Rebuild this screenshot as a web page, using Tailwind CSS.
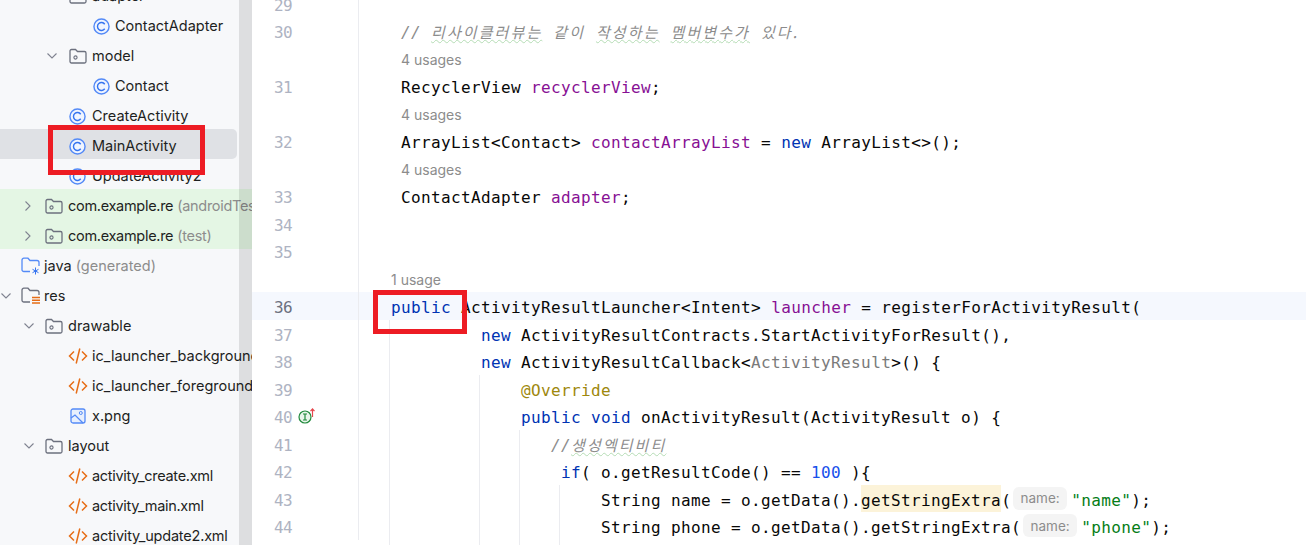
<!DOCTYPE html>
<html lang="en">
<head>
  <meta charset="UTF-8" />
  <title>MainActivity.java</title>
  <script src="https://cdn.jsdelivr.net/npm/@tailwindcss/browser@4"></script>
</head>
<body class="bg-white">
  <svg class="hidden">
    <symbol id="cls" viewBox="0 0 18 18">
      <circle cx="9" cy="9" r="8" fill="#f0f5ff" stroke="#548af7" stroke-width="1.5" />
      <path d="M12.4 6.6A4.2 4.2 0 1 0 12.4 11.4" fill="none" stroke="#3574f0" stroke-width="1.5" />
    </symbol>
    <symbol id="pkg" viewBox="0 0 18 16">
      <path d="M1 3a1.5 1.5 0 0 1 1.5-1.5h4L8.5 3.5h7A1.5 1.5 0 0 1 17 5v8.500a1.500 1.500 0 0 1-1.500 1.500h-13A1.500 1.500 0 0 1 1 13.500z" fill="#f7f8fa" stroke="#6c707e" stroke-width="1.300" />
      <circle cx="6.500" cy="9.500" r="1.600" fill="none" stroke="#6c707e" stroke-width="1.100" />
    </symbol>
    <symbol id="pkgg" viewBox="0 0 18 16">
      <path d="M1 3a1.5 1.5 0 0 1 1.5-1.5h4L8.5 3.5h7A1.5 1.5 0 0 1 17 5v8.500a1.500 1.500 0 0 1-1.500 1.500h-13A1.500 1.500 0 0 1 1 13.500z" fill="#e4f6e4" stroke="#6c707e" stroke-width="1.300" />
      <circle cx="6.500" cy="9.500" r="1.600" fill="none" stroke="#6c707e" stroke-width="1.100" />
    </symbol>
    <symbol id="xml" viewBox="0 0 20 18">
      <path d="M6 4.500 1.500 9 6 13.500M14 4.500 18.500 9 14 13.500M11.800 1.500 8.200 16.500" fill="none" stroke="#e66d17" stroke-width="1.500" />
    </symbol>
    <symbol id="img" viewBox="0 0 16 16">
      <rect x="1" y="1" width="14" height="14" rx="2" fill="#e7effd" stroke="#548af7" stroke-width="1.300" />
      <circle cx="10.800" cy="5" r="1.500" fill="none" stroke="#548af7" />
      <path d="M1 10 5 7l8 8" fill="none" stroke="#548af7" stroke-width="1.300" />
    </symbol>
    <symbol id="chev" viewBox="0 0 12 12">
      <path d="M1.500 3.500 6 8l4.500-4.500" fill="none" stroke="#7f8390" stroke-width="1.100" />
    </symbol>
    <symbol id="chevr" viewBox="0 0 12 12">
      <path d="M3.500 1.500 8 6l-4.500 4.500" fill="none" stroke="#7f8390" stroke-width="1.100" />
    </symbol>
  </svg>

  <div class="relative flex h-[545px] w-[1306px] overflow-hidden">
    <!-- project tree -->
    <aside class="relative h-full w-[252px] shrink-0 overflow-hidden bg-[#f7f8fa] font-['Inter',sans-serif] text-[14.5px] text-[#1e1f22]">
      <div class="-mt-[21px]">
        <div class="flex h-[30px] items-center whitespace-nowrap pl-[69px] pt-[4px]"><svg class="mr-[5px] h-[16px] w-[18px] shrink-0"><use href="#pkg" /></svg>adapter</div>
        <div class="flex h-[30px] items-center whitespace-nowrap pl-[93px] pt-[4px]"><svg class="mr-[5px] h-[17px] w-[17px] shrink-0"><use href="#cls" /></svg>ContactAdapter</div>
        <div class="flex h-[30px] items-center whitespace-nowrap pl-[46px] pt-[4px]"><svg class="mr-[11px] h-[12px] w-[12px] shrink-0"><use href="#chev" /></svg><svg class="mr-[5px] h-[16px] w-[18px] shrink-0"><use href="#pkg" /></svg>model</div>
        <div class="flex h-[30px] items-center whitespace-nowrap pl-[93px] pt-[4px]"><svg class="mr-[5px] h-[17px] w-[17px] shrink-0"><use href="#cls" /></svg>Contact</div>
        <div class="flex h-[30px] items-center whitespace-nowrap pl-[69px] pt-[4px]"><svg class="mr-[6px] h-[17px] w-[17px] shrink-0"><use href="#cls" /></svg>CreateActivity</div>
        <div class="flex h-[30px] w-[237px] items-center whitespace-nowrap rounded-r-[5px] bg-[#dfe1e5] pl-[69px] pt-[4px]"><svg class="mr-[6px] h-[17px] w-[17px] shrink-0"><use href="#cls" /></svg>MainActivity</div>
        <div class="flex h-[30px] items-center whitespace-nowrap pl-[69px] pt-[4px]"><svg class="mr-[6px] h-[17px] w-[17px] shrink-0"><use href="#cls" /></svg>UpdateActivity2</div>
        <div class="flex h-[30px] items-center whitespace-nowrap bg-[#e4f6e4] pl-[22px] pt-[4px] tracking-[-0.3px]"><svg class="mr-[11px] h-[12px] w-[12px] shrink-0"><use href="#chevr" /></svg><svg class="mr-[5px] h-[16px] w-[18px] shrink-0"><use href="#pkgg" /></svg>com.example.re<span class="ml-[4px] text-[#8c8c8c]">(androidTest)</span></div>
        <div class="flex h-[30px] items-center whitespace-nowrap bg-[#e4f6e4] pl-[22px] pt-[4px] tracking-[-0.3px]"><svg class="mr-[11px] h-[12px] w-[12px] shrink-0"><use href="#chevr" /></svg><svg class="mr-[5px] h-[16px] w-[18px] shrink-0"><use href="#pkgg" /></svg>com.example.re<span class="ml-[4px] text-[#8c8c8c]">(test)</span></div>
        <div class="flex h-[30px] items-center whitespace-nowrap pl-[21px] pt-[4px]">
          <svg class="mr-[3px] h-[18px] w-[20px] shrink-0" viewBox="0 0 20 18"><path d="M9 14.500H3A1.800 1.800 0 0 1 1 12.700V3a1.800 1.800 0 0 1 2-1.800h4l2 2.300h7a2 2 0 0 1 2 2V9" fill="none" stroke="#548af7" stroke-width="1.300" /><path d="M14.500 10.500v7M11.500 12.300l6 3.400M17.500 12.300l-6 3.400" stroke="#3574f0" stroke-width="1" /></svg>
          java<span class="ml-[4px] text-[#8c8c8c]">(generated)</span>
        </div>
        <div class="flex h-[30px] items-center whitespace-nowrap pl-0 pt-[4px]">
          <svg class="mr-[9px] h-[12px] w-[12px] shrink-0"><use href="#chev" /></svg>
          <svg class="mr-[3px] h-[18px] w-[20px] shrink-0" viewBox="0 0 20 18"><path d="M9 15H3A1.800 1.800 0 0 1 1 13.200V3a1.800 1.800 0 0 1 2-1.800h4l2 2.300h7a2 2 0 0 1 2 2V8" fill="none" stroke="#6c707e" stroke-width="1.300" /><path d="M11 10.500h8M11 13.200h8M11 16h8" stroke="#e66d17" stroke-width="1.500" /></svg>
          res
        </div>
        <div class="flex h-[30px] items-center whitespace-nowrap pl-[23px] pt-[4px]"><svg class="mr-[10px] h-[12px] w-[12px] shrink-0"><use href="#chev" /></svg><svg class="mr-[5px] h-[16px] w-[18px] shrink-0"><use href="#pkg" /></svg>drawable</div>
        <div class="flex h-[30px] items-center whitespace-nowrap pl-[68px] pt-[4px]"><svg class="mr-[4px] h-[18px] w-[20px] shrink-0"><use href="#xml" /></svg>ic_launcher_background</div>
        <div class="flex h-[30px] items-center whitespace-nowrap pl-[68px] pt-[4px]"><svg class="mr-[4px] h-[18px] w-[20px] shrink-0"><use href="#xml" /></svg>ic_launcher_foreground</div>
        <div class="flex h-[30px] items-center whitespace-nowrap pl-[70px] pt-[4px]"><svg class="mr-[6px] h-[16px] w-[16px] shrink-0"><use href="#img" /></svg>x.png</div>
        <div class="flex h-[30px] items-center whitespace-nowrap pl-[23px] pt-[4px]"><svg class="mr-[10px] h-[12px] w-[12px] shrink-0"><use href="#chev" /></svg><svg class="mr-[5px] h-[16px] w-[18px] shrink-0"><use href="#pkg" /></svg>layout</div>
        <div class="flex h-[30px] items-center whitespace-nowrap pl-[68px] pt-[4px] tracking-[-0.3px]"><svg class="mr-[4px] h-[18px] w-[20px] shrink-0"><use href="#xml" /></svg>activity_create.xml</div>
        <div class="flex h-[30px] items-center whitespace-nowrap pl-[68px] pt-[4px] tracking-[-0.3px]"><svg class="mr-[4px] h-[18px] w-[20px] shrink-0"><use href="#xml" /></svg>activity_main.xml</div>
        <div class="flex h-[30px] items-center whitespace-nowrap pl-[68px] pt-[4px] tracking-[-0.2px]"><svg class="mr-[4px] h-[18px] w-[20px] shrink-0"><use href="#xml" /></svg>activity_update2.xml</div>
      </div>
      <!-- scrollbar sits over the rows -->
      <div class="absolute bottom-0 right-0 top-0 w-[13px] bg-black/10"></div>
    </aside>

    <!-- editor -->
    <main class="relative min-w-0 flex-1 overflow-hidden font-['DejaVu_Sans_Mono',monospace] text-[16px] tracking-[0.37px] text-[#080808]">
      <div class="-mt-[10.5px]">
        <div class="flex h-[27.5px] items-center"><span class="w-[40px] pt-[5px] text-right text-[16px] tracking-[-0.6px] text-[#aeb3c2]">29</span><span class="h-full w-[67px] border-r border-[#ebecf0]"></span></div>
        <div class="flex h-[27.5px] items-center"><span class="w-[40px] pt-[5px] text-right text-[16px] tracking-[-0.6px] text-[#aeb3c2]">30</span><span class="h-full w-[67px] border-r border-[#ebecf0]"></span><span class="whitespace-pre pl-[42px] pt-[5px] italic text-[#8c8c8c]">// <span class="font-['Noto_Sans_CJK_KR',sans-serif] text-[15px] tracking-[2.1px]"><span class="underline decoration-[#b5dcb5] decoration-wavy decoration-1">리사이클러뷰는</span>  같이  <span class="underline decoration-[#b5dcb5] decoration-wavy decoration-1">작성하는</span>  <span class="underline decoration-[#b5dcb5] decoration-wavy decoration-1">멤버변수가</span>  있다.</span></span></div>
        <div class="flex h-[27.5px] items-center"><span class="w-[40px]"></span><span class="h-full w-[67px] border-r border-[#ebecf0]"></span><span class="pl-[42px] pt-[3px] font-['Inter',sans-serif] text-[14px] tracking-normal text-[#8c8c8c]">4 usages</span></div>
        <div class="flex h-[27.5px] items-center"><span class="w-[40px] pt-[5px] text-right text-[16px] tracking-[-0.6px] text-[#aeb3c2]">31</span><span class="h-full w-[67px] border-r border-[#ebecf0]"></span><span class="whitespace-pre pl-[42px] pt-[5px]">RecyclerView <span class="text-[#871094]">recyclerView</span>;</span></div>
        <div class="flex h-[27.5px] items-center"><span class="w-[40px]"></span><span class="h-full w-[67px] border-r border-[#ebecf0]"></span><span class="pl-[42px] pt-[3px] font-['Inter',sans-serif] text-[14px] tracking-normal text-[#8c8c8c]">4 usages</span></div>
        <div class="flex h-[27.5px] items-center"><span class="w-[40px] pt-[5px] text-right text-[16px] tracking-[-0.6px] text-[#aeb3c2]">32</span><span class="h-full w-[67px] border-r border-[#ebecf0]"></span><span class="whitespace-pre pl-[42px] pt-[5px]">ArrayList&lt;Contact&gt; <span class="text-[#871094]">contactArrayList</span> = <span class="text-[#0033b3]">new</span> ArrayList&lt;&gt;();</span></div>
        <div class="flex h-[27.5px] items-center"><span class="w-[40px]"></span><span class="h-full w-[67px] border-r border-[#ebecf0]"></span><span class="pl-[42px] pt-[3px] font-['Inter',sans-serif] text-[14px] tracking-normal text-[#8c8c8c]">4 usages</span></div>
        <div class="flex h-[27.5px] items-center"><span class="w-[40px] pt-[5px] text-right text-[16px] tracking-[-0.6px] text-[#aeb3c2]">33</span><span class="h-full w-[67px] border-r border-[#ebecf0]"></span><span class="whitespace-pre pl-[42px] pt-[5px]">ContactAdapter <span class="text-[#871094]">adapter</span>;</span></div>
        <div class="flex h-[27.5px] items-center"><span class="w-[40px] pt-[5px] text-right text-[16px] tracking-[-0.6px] text-[#aeb3c2]">34</span><span class="h-full w-[67px] border-r border-[#ebecf0]"></span></div>
        <div class="flex h-[27.5px] items-center"><span class="w-[40px] pt-[5px] text-right text-[16px] tracking-[-0.6px] text-[#aeb3c2]">35</span><span class="h-full w-[67px] border-r border-[#ebecf0]"></span></div>
        <div class="flex h-[27.5px] items-center"><span class="w-[40px]"></span><span class="h-full w-[67px] border-r border-[#ebecf0]"></span><span class="pl-[32px] pt-[3px] font-['Inter',sans-serif] text-[14px] tracking-normal text-[#8c8c8c]">1 usage</span></div>
        <div class="flex h-[27.5px] items-center bg-[#f5f8fe]"><span class="w-[40px] pt-[5px] text-right text-[16px] tracking-[-0.6px] text-[#6c707e]">36</span><span class="h-full w-[67px] border-r border-[#ebecf0]"></span><span class="whitespace-pre pl-[32px] pt-[5px]"><span class="text-[#0033b3]">public</span> ActivityResultLauncher&lt;Intent&gt; <span class="text-[#871094]">launcher</span> = registerForActivityResult(</span></div>
        <div class="flex h-[27.5px] items-center"><span class="w-[40px] pt-[5px] text-right text-[16px] tracking-[-0.6px] text-[#aeb3c2]">37</span><span class="h-full w-[67px] border-r border-[#ebecf0]"></span><span class="whitespace-pre pl-[122px] pt-[5px]"><span class="text-[#0033b3]">new</span> ActivityResultContracts.StartActivityForResult(),</span></div>
        <div class="flex h-[27.5px] items-center"><span class="w-[40px] pt-[5px] text-right text-[16px] tracking-[-0.6px] text-[#aeb3c2]">38</span><span class="h-full w-[67px] border-r border-[#ebecf0]"></span><span class="whitespace-pre pl-[122px] pt-[5px]"><span class="text-[#0033b3]">new</span> ActivityResultCallback&lt;<span class="text-[#7a7a7a]">ActivityResult</span>&gt;() {</span></div>
        <div class="flex h-[27.5px] items-center"><span class="w-[40px] pt-[5px] text-right text-[16px] tracking-[-0.6px] text-[#aeb3c2]">39</span><span class="h-full w-[67px] border-r border-[#ebecf0]"></span><span class="whitespace-pre pl-[162px] pt-[5px] text-[#9e880d]">@Override</span></div>
        <div class="flex h-[27.5px] items-center"><span class="w-[40px] pt-[5px] text-right text-[16px] tracking-[-0.6px] text-[#aeb3c2]">40</span>
          <span class="flex h-full w-[67px] items-center border-r border-[#ebecf0] pl-[6px]">
            <svg class="h-[18px] w-[20px]" viewBox="0 0 20 18"><circle cx="7" cy="10" r="6" fill="#e9f5eb" stroke="#208a3c" stroke-width="1.200" /><path d="M5 7h4M5 13h4M7 7v6" stroke="#208a3c" stroke-width="1.200" fill="none" /><path d="M14.500 10V2M12.500 4.200 14.500 2l2 2.200" stroke="#e5484d" stroke-width="1.200" fill="none" /></svg>
          </span>
          <span class="whitespace-pre pl-[162px] pt-[5px]"><span class="text-[#0033b3]">public void</span> onActivityResult(ActivityResult o) {</span></div>
        <div class="flex h-[27.5px] items-center"><span class="w-[40px] pt-[5px] text-right text-[16px] tracking-[-0.6px] text-[#aeb3c2]">41</span><span class="h-full w-[67px] border-r border-[#ebecf0]"></span><span class="whitespace-pre pl-[192px] pt-[5px] italic text-[#8c8c8c]">//<span class="font-['Noto_Sans_CJK_KR',sans-serif] text-[15px] tracking-[2.1px] underline decoration-[#b5dcb5] decoration-wavy decoration-1">생성엑티비티</span></span></div>
        <div class="flex h-[27.5px] items-center"><span class="w-[40px] pt-[5px] text-right text-[16px] tracking-[-0.6px] text-[#aeb3c2]">42</span><span class="h-full w-[67px] border-r border-[#ebecf0]"></span><span class="whitespace-pre pl-[202px] pt-[5px]"><span class="text-[#0033b3]">if</span>( o.getResultCode() == <span class="text-[#1750eb]">100</span> ){</span></div>
        <div class="flex h-[27.5px] items-center"><span class="w-[40px] pt-[5px] text-right text-[16px] tracking-[-0.6px] text-[#aeb3c2]">43</span><span class="h-full w-[67px] border-r border-[#ebecf0]"></span><span class="flex h-full items-center whitespace-pre pl-[242px]"><span class="pt-[5px]">String name = o.getData().</span><span class="flex h-full items-center bg-[#fcf3d9] pt-[5px]">getStringExtra</span><span class="pt-[5px]">(</span><span class="ml-[2px] mr-[4px] flex h-[23px] w-[54px] items-center justify-center rounded-[6px] bg-[#f4f4f4] font-['Inter',sans-serif] text-[13.5px] tracking-normal text-[#8c8c8c]">name:</span><span class="pt-[5px]"><span class="text-[#067d17]">"name"</span>);</span></span></div>
        <div class="flex h-[27.5px] items-center"><span class="w-[40px] pt-[5px] text-right text-[16px] tracking-[-0.6px] text-[#aeb3c2]">44</span><span class="h-full w-[67px] border-r border-[#ebecf0]"></span><span class="flex h-full items-center whitespace-pre pl-[242px]"><span class="pt-[5px]">String phone = o.getData().getStringExtra(</span><span class="ml-[2px] mr-[4px] flex h-[23px] w-[54px] items-center justify-center rounded-[6px] bg-[#f4f4f4] font-['Inter',sans-serif] text-[13.5px] tracking-normal text-[#8c8c8c]">name:</span><span class="pt-[5px]"><span class="text-[#067d17]">"phone"</span>);</span></span></div>
      </div>
      <!-- indent guides -->
      <div class="absolute bottom-0 left-[137px] top-[320px] w-px bg-[#ebecf0]"></div>
      <div class="absolute bottom-0 left-[227px] top-[375px] w-px bg-[#ebecf0]"></div>
      <div class="absolute bottom-0 left-[267px] top-[430px] w-px bg-[#ebecf0]"></div>
      <div class="absolute bottom-0 left-[307px] top-[485px] w-px bg-[#ebecf0]"></div>
    </main>

    <!-- red annotation boxes drawn on the screenshot -->
    <div class="absolute left-[48px] top-[125px] h-[50px] w-[157px] border-[5px] border-[#ed1c24]"></div>
    <div class="absolute left-[373px] top-[290px] h-[44px] w-[94px] border-[5px] border-[#ed1c24]"></div>
  </div>
</body>
</html>
